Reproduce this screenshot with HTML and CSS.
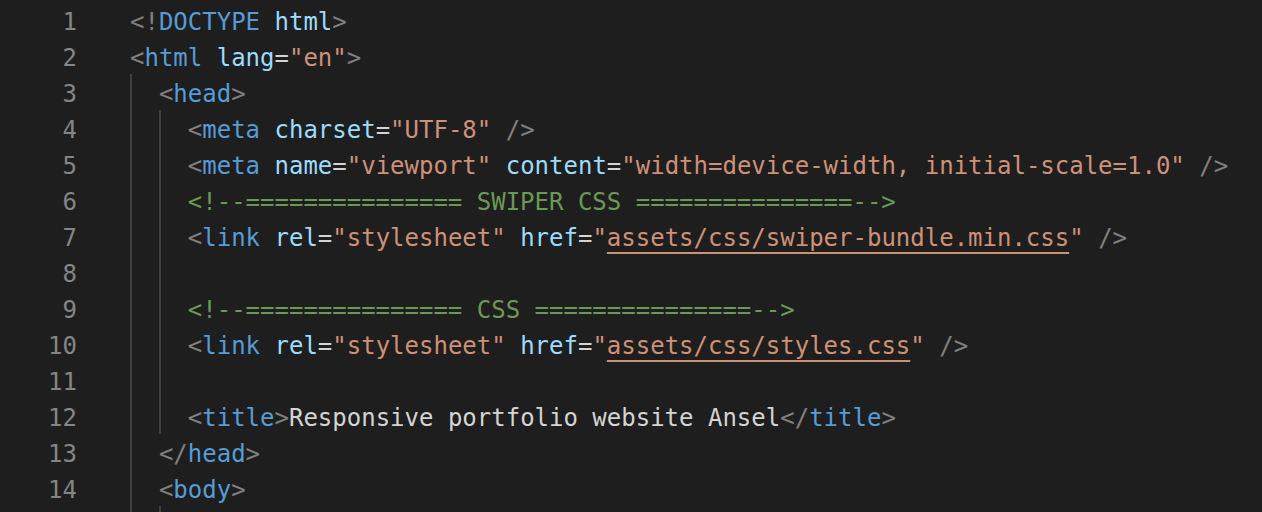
FILE: index.html
```html
<!DOCTYPE html>
<html lang="en">
<head>
<meta charset="UTF-8">
<title>Editor</title>
<link rel="stylesheet" href="styles.css">
</head>
<body>
<div class="editor">
  <div class="row"><span class="ln">1</span><span class="code"><span class="p">&lt;!</span><span class="t">DOCTYPE</span> <span class="a">html</span><span class="p">&gt;</span></span></div>
  <div class="row"><span class="ln">2</span><span class="code"><span class="p">&lt;</span><span class="t">html</span> <span class="a">lang</span><span class="o">=</span><span class="s">"en"</span><span class="p">&gt;</span></span></div>
  <div class="row"><span class="ln">3</span><span class="ind"></span><span class="code"><span class="p">&lt;</span><span class="t">head</span><span class="p">&gt;</span></span></div>
  <div class="row"><span class="ln">4</span><span class="ind"></span><span class="ind"></span><span class="code"><span class="p">&lt;</span><span class="t">meta</span> <span class="a">charset</span><span class="o">=</span><span class="s">"UTF-8"</span> <span class="p">/&gt;</span></span></div>
  <div class="row"><span class="ln">5</span><span class="ind"></span><span class="ind"></span><span class="code"><span class="p">&lt;</span><span class="t">meta</span> <span class="a">name</span><span class="o">=</span><span class="s">"viewport"</span> <span class="a">content</span><span class="o">=</span><span class="s">"width=device-width, initial-scale=1.0"</span> <span class="p">/&gt;</span></span></div>
  <div class="row"><span class="ln">6</span><span class="ind"></span><span class="ind"></span><span class="code"><span class="c">&lt;!--=============== SWIPER CSS ===============--&gt;</span></span></div>
  <div class="row"><span class="ln">7</span><span class="ind"></span><span class="ind"></span><span class="code"><span class="p">&lt;</span><span class="t">link</span> <span class="a">rel</span><span class="o">=</span><span class="s">"stylesheet"</span> <span class="a">href</span><span class="o">=</span><span class="s">"<span class="u">assets/css/swiper-bundle.min.css</span>"</span> <span class="p">/&gt;</span></span></div>
  <div class="row"><span class="ln">8</span><span class="ind"></span><span class="ind"></span><span class="code"></span></div>
  <div class="row"><span class="ln">9</span><span class="ind"></span><span class="ind"></span><span class="code"><span class="c">&lt;!--=============== CSS ===============--&gt;</span></span></div>
  <div class="row"><span class="ln">10</span><span class="ind"></span><span class="ind"></span><span class="code"><span class="p">&lt;</span><span class="t">link</span> <span class="a">rel</span><span class="o">=</span><span class="s">"stylesheet"</span> <span class="a">href</span><span class="o">=</span><span class="s">"<span class="u">assets/css/styles.css</span>"</span> <span class="p">/&gt;</span></span></div>
  <div class="row"><span class="ln">11</span><span class="ind"></span><span class="ind"></span><span class="code"></span></div>
  <div class="row"><span class="ln">12</span><span class="ind"></span><span class="ind"></span><span class="code"><span class="p">&lt;</span><span class="t">title</span><span class="p">&gt;</span><span class="x">Responsive portfolio website Ansel</span><span class="p">&lt;/</span><span class="t">title</span><span class="p">&gt;</span></span></div>
  <div class="row"><span class="ln">13</span><span class="ind"></span><span class="code"><span class="p">&lt;/</span><span class="t">head</span><span class="p">&gt;</span></span></div>
  <div class="row"><span class="ln">14</span><span class="ind"></span><span class="code"><span class="p">&lt;</span><span class="t">body</span><span class="p">&gt;</span></span></div>
  <div class="row"><span class="ln"></span><span class="ind"></span><span class="ind"></span><span class="code"></span></div>
</div>
</body>
</html>
```

FILE: styles.css
```css
html, body {
  margin: 0;
  padding: 0;
  background: #1e1e1e;
  overflow: hidden;
}

.editor {
  padding-top: 2px;
  font-family: "DejaVu Sans Mono", "Liberation Mono", monospace;
  font-size: 24px;
  line-height: 36px;
  color: #d4d4d4;
}

.row {
  display: flex;
  height: 36px;
  white-space: pre;
}

.ln {
  width: 77px;
  margin-right: 53px;
  padding-top: 2px;
  text-align: right;
  color: #858585;
  flex: none;
}

.ind {
  flex: none;
  width: 2ch;
  box-sizing: border-box;
  border-left: 2px solid #404040;
}

.code {
  flex: none;
  padding-top: 2px;
}

.p { color: #808080; }
.t { color: #569cd6; }
.a { color: #9cdcfe; }
.o { color: #d4d4d4; }
.s { color: #ce9178; }
.c { color: #6a9955; }
.x { color: #d4d4d4; }

.u {
  text-decoration: underline;
  text-decoration-thickness: 2px;
  text-underline-offset: 6px;
}
```
